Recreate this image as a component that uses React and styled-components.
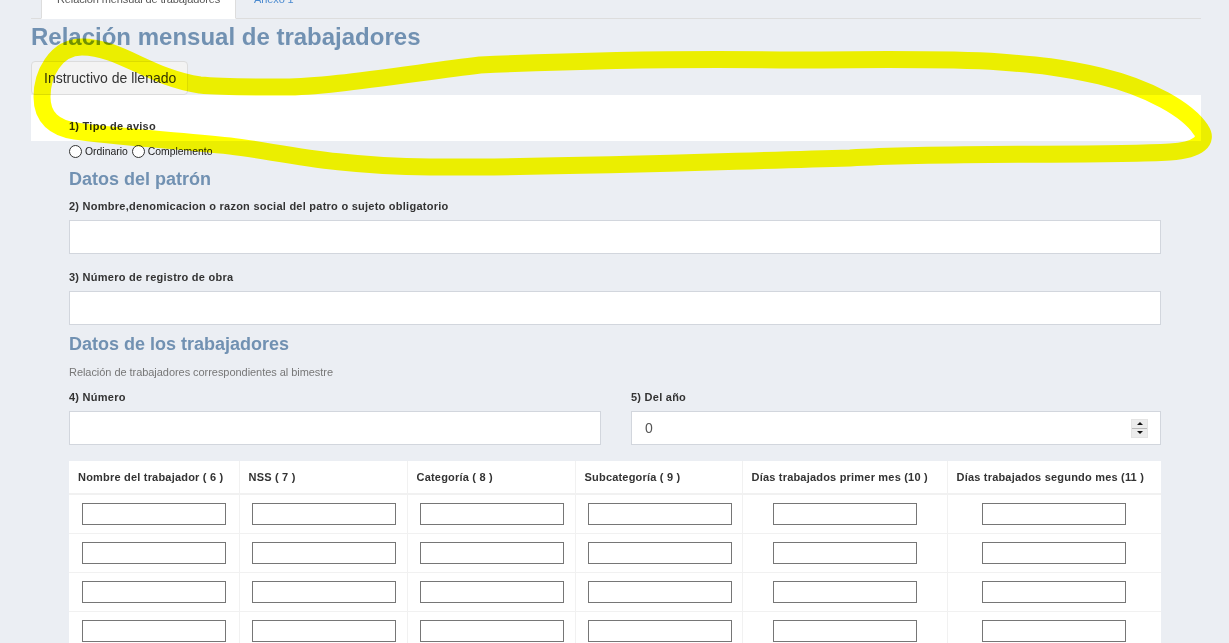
import React from 'react'
import styled, { createGlobalStyle } from 'styled-components'

const GlobalStyle = createGlobalStyle`
  html, body {
    margin: 0;
    padding: 0;
    overflow: hidden;
    background: #ebeef3;
    font-family: "Liberation Sans", Arial, sans-serif;
    color: #333;
  }
`

const Page = styled.div`
  position: relative;
  width: 1229px;
  height: 643px;
  overflow: hidden;
`

const Container = styled.div`
  width: 1170px;
  margin-left: 31px;
`

const Tabs = styled.ul`
  display: flex;
  margin: -20px 0 0;
  padding: 0 0 0 10px;
  list-style: none;
  border-bottom: 1px solid #dddddd;
`

const Tab = styled.li`
  margin-right: 2px;
  margin-bottom: -1px;

  a {
    display: block;
    padding: 10px 15px 10px;
    font-size: 11px;
    line-height: 17px;
    letter-spacing: -0.12px;
    text-decoration: none;
    border: 1px solid ${p => (p.$active ? '#dddddd' : 'transparent')};
    border-bottom-color: ${p => (p.$active ? '#ffffff' : 'transparent')};
    background: ${p => (p.$active ? '#ffffff' : 'transparent')};
    color: ${p => (p.$active ? '#555555' : '#4a8ad0')};
  }
`

const Title = styled.h1`
  margin: 5px 0 0;
  font-size: 24px;
  line-height: 26px;
  font-weight: bold;
  color: #7191b2;
`

const GuideButton = styled.button`
  display: block;
  margin-top: 11px;
  height: 34px;
  padding: 0 11px 0 12px;
  font-family: inherit;
  font-size: 14px;
  color: #333;
  background: #f3f3f3;
  border: 1px solid #dcdcdc;
  border-radius: 4px;
`

const Panel = styled.div`
  background: #ffffff;
  padding: 24px 38px 7px;
`

const Label = styled.label`
  display: block;
  font-size: 11px;
  line-height: 15px;
  font-weight: bold;
  letter-spacing: 0.25px;
  color: #333;
`

const Form = styled.div`
  display: flex;
  flex-direction: column;
  padding: 0 40px 0 38px;
`

const RadioRow = styled.div`
  display: flex;
  align-items: center;
  margin: 3px 0 2px;
  height: 14px;
  font-size: 10.4px;
`

const RadioOption = styled.label`
  display: flex;
  align-items: center;
  margin-right: 4px;
  color: #222;
`

const Radio = styled.input`
  appearance: none;
  width: 13px;
  height: 13px;
  margin: 0 3px 0 0;
  border: 1px solid #333;
  border-radius: 50%;
  background: #fff;
`

const SectionTitle = styled.h2`
  margin: 9px 0 0;
  font-size: 18px;
  line-height: 20px;
  font-weight: bold;
  color: #7191b2;
`

const Field = styled.div`
  margin-top: ${p => (p.$first ? '10px' : '16px')};

  ${Label} {
    margin-bottom: 6px;
  }
`

const TextInput = styled.input`
  display: block;
  box-sizing: border-box;
  width: 100%;
  height: 34px;
  margin: 0;
  padding: 0 12px;
  border: 1px solid #d2d6dd;
  background: #fff;
  font-family: inherit;
  font-size: 14px;
  color: #555;
`

const Hint = styled.p`
  margin: 11px 0 0;
  font-size: 11px;
  line-height: 14px;
  letter-spacing: -0.05px;
  color: #777;
`

const TwoColumns = styled.div`
  display: grid;
  grid-template-columns: 532px 1fr;
  column-gap: 30px;
  margin-top: 11px;

  ${Label} {
    margin-bottom: 6px;
  }
`

const NumberBox = styled.div`
  display: flex;
  align-items: center;
  box-sizing: border-box;
  height: 34px;
  padding: 0 12px 0 13px;
  border: 1px solid #d2d6dd;
  background: #fff;

  input {
    flex: 1;
    min-width: 0;
    border: 0;
    padding: 0;
    outline: none;
    font-family: inherit;
    font-size: 14px;
    color: #555;
    background: transparent;
  }
`

const Spinner = styled.div`
  display: flex;
  flex-direction: column;
  gap: 1px;
  width: 15px;
  height: 17px;
  background: #b9b9b9;
  border: 1px solid #e4e4e4;
`

const SpinHalf = styled.span`
  flex: 1;
  display: flex;
  align-items: center;
  justify-content: center;
  background: #ececec;

  &::after {
    content: '';
    border-left: 3px solid transparent;
    border-right: 3px solid transparent;
    ${p => (p.$down ? 'border-top: 3px solid #111;' : 'border-bottom: 3px solid #111;')}
  }
`

const Table = styled.table`
  margin-top: 16px;
  width: 1092px;
  border-collapse: collapse;
  background: #fff;
  table-layout: fixed;

  th {
    padding: 8px 8px 8px 9px;
    font-size: 11px;
    line-height: 16px;
    font-weight: bold;
    letter-spacing: 0.2px;
    text-align: left;
    color: #333;
    border-left: 1px solid #f1f1f1;
    border-bottom: 2px solid #f1f1f1;
    white-space: nowrap;
  }

  td {
    padding: 8px 12px;
    border-left: 1px solid #f1f1f1;
    border-top: 1px solid #f1f1f1;
  }

  th:first-child, td:first-child {
    border-left: 0;
  }

  td:first-child {
    padding-left: 13px;
  }
`

const Cell = styled.td`
  text-align: ${p => (p.$center ? 'center' : 'left')};
`

const CellInput = styled.input`
  display: inline-block;
  vertical-align: top;
  box-sizing: border-box;
  width: 144px;
  height: 22px;
  margin: 0;
  padding: 0 3px;
  border: 1px solid #767676;
  background: #fff;
`

const Highlight = styled.svg`
  position: absolute;
  left: 0;
  top: 0;
  pointer-events: none;
  mix-blend-mode: multiply;
`

const columns = [
  { title: 'Nombre del trabajador ( 6 )', width: 170 },
  { title: 'NSS ( 7 )', width: 168 },
  { title: 'Categoría ( 8 )', width: 168 },
  { title: 'Subcategoría ( 9 )', width: 167 },
  { title: 'Días trabajados primer mes (10 )', width: 205, center: true },
  { title: 'Días trabajados segundo mes (11 )', width: 214, center: true },
]

const rows = [1, 2, 3, 4]

export default function App() {
  return (
    <Page>
      <GlobalStyle />
      <Container>
        <Tabs>
          <Tab $active><a href="#">Relación mensual de trabajadores</a></Tab>
          <Tab><a href="#">Anexo 1</a></Tab>
        </Tabs>
        <Title>Relación mensual de trabajadores</Title>
        <GuideButton type="button">Instructivo de llenado</GuideButton>
        <Panel>
          <Label>1) Tipo de aviso</Label>
        </Panel>
        <Form>
          <RadioRow>
            <RadioOption><Radio type="radio" name="aviso" />Ordinario</RadioOption>
            <RadioOption><Radio type="radio" name="aviso" />Complemento</RadioOption>
          </RadioRow>

          <SectionTitle>Datos del patrón</SectionTitle>
          <Field $first>
            <Label>2) Nombre,denomicacion o razon social del patro o sujeto obligatorio</Label>
            <TextInput type="text" />
          </Field>
          <Field>
            <Label>3) Número de registro de obra</Label>
            <TextInput type="text" />
          </Field>

          <SectionTitle>Datos de los trabajadores</SectionTitle>
          <Hint>Relación de trabajadores correspondientes al bimestre</Hint>
          <TwoColumns>
            <div>
              <Label>4) Número</Label>
              <TextInput type="text" />
            </div>
            <div>
              <Label>5) Del año</Label>
              <NumberBox>
                <input type="text" defaultValue="0" />
                <Spinner>
                  <SpinHalf />
                  <SpinHalf $down />
                </Spinner>
              </NumberBox>
            </div>
          </TwoColumns>

          <Table>
            <colgroup>
              {columns.map(c => <col key={c.title} style={{ width: c.width }} />)}
            </colgroup>
            <thead>
              <tr>
                {columns.map(c => <th key={c.title}>{c.title}</th>)}
              </tr>
            </thead>
            <tbody>
              {rows.map(r => (
                <tr key={r}>
                  {columns.map(c => (
                    <Cell key={c.title} $center={c.center}>
                      <CellInput type="text" />
                    </Cell>
                  ))}
                </tr>
              ))}
            </tbody>
          </Table>
        </Form>
      </Container>

      <Highlight width="1229" height="643" viewBox="0 0 1229 643">
        <path
          d="M 200 85
             C 150 78, 120 47, 82 47
             C 55 47, 42 75, 42 97
             C 42 118, 55 128, 75 131
             C 110 136, 170 140, 230 146
             C 280 152, 330 166, 430 167
             C 560 168, 700 162, 850 158
             C 950 152, 1100 156, 1170 152
             C 1200 150, 1208 140, 1201 130
             C 1188 110, 1150 88, 1100 76
             C 1060 67, 1040 65, 1000 62
             C 940 58, 880 60, 780 60
             C 650 58, 550 62, 480 65
             C 400 75, 320 88, 280 87
             C 250 87, 220 87, 200 85 Z"
          fill="none"
          stroke="#ffff00"
          strokeWidth="17"
          strokeLinejoin="round"
        />
      </Highlight>
    </Page>
  )
}
